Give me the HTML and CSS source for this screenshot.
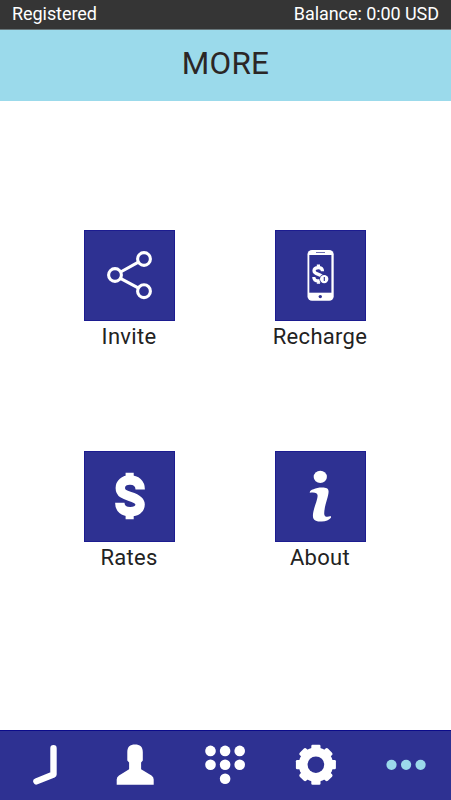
FILE: index.html
```html
<!DOCTYPE html>
<html lang="en">
<head>
<meta charset="utf-8">
<title>More</title>
<link rel="stylesheet" href="styles.css">
</head>
<body>
<div class="screen">
  <div class="status"><span class="state">Registered</span><span class="balance">Balance: 0:00 USD</span></div>
  <header class="title"><h1>MORE</h1></header>
  <main class="menu">
    <a class="item">
      <svg class="tile" viewBox="0 0 91 91" fill="none" stroke="#fff" stroke-width="3.1"><circle cx="31" cy="45" r="6.4"/><circle cx="60" cy="29" r="6.4"/><circle cx="60" cy="61.2" r="6.4"/><path d="M36.6 42L54.4 32.1M36.4 48.3L54.6 58.1"/></svg>
      <span>Invite</span>
    </a>
    <a class="item">
      <svg class="tile" viewBox="0 0 91 91"><rect x="32.5" y="20" width="26.2" height="50.7" rx="4.5" fill="#fff"/><path d="M34.3 25H56.4V62.7H34.3Z" fill="#2e3192"/><path d="M41 22.5H50" stroke="#2e3192" stroke-width=".7"/><circle cx="45.3" cy="66.6" r="1.7" fill="#2e3192"/><path d="M47.5 41.2C47.5 38.7 45.8 37.6 43.4 37.6C40.7 37.6 39 39 39 40.8C39 43 41 43.7 43.4 44.4C46 45.2 47.5 46 47.5 47.8C47.5 49.8 45.8 50.9 43.4 50.9C40.4 50.9 38.8 49.4 38.8 47M43.4 34.5V38M43.4 50.5V53.8" fill="none" stroke="#fff" stroke-width="3.2"/><circle cx="49.2" cy="49.1" r="4.9" fill="#2e3192"/><circle cx="49.2" cy="49.1" r="4.2" fill="#fff"/><path d="M49.3 47V51.1" stroke="#2e3192" stroke-width="1.1"/></svg>
      <span>Recharge</span>
    </a>
    <a class="item">
      <svg class="tile" viewBox="0 0 91 91"><path d="M56.2 38.4C56.2 32.4 52.3 29 46 29C39.9 29 36.3 32.5 36.3 36.9C36.3 42.2 40.5 43.8 46 45.4C52.8 47.4 56.1 49.5 56.1 53.6C56.1 58.2 52.3 60.7 46.2 60.7C39.5 60.7 35.8 57.5 35.8 51.8" fill="none" stroke="#fff" stroke-width="9.4"/><path d="M41.6 21.8h8.1v6h-8.1zM41.6 62h8.1v6.3h-8.1z" fill="#fff"/></svg>
      <span>Rates</span>
    </a>
    <a class="item">
      <svg class="tile" viewBox="0 0 91 91" fill="#fff"><ellipse cx="45.3" cy="25.9" rx="6.6" ry="6.2"/><path d="M34.7 41.7C35 39.4 36.1 38.9 38.5 38.2C41 37.2 43.5 36.6 47.2 36.6C51 36.6 53.6 37.3 53.6 40.6C53.6 45.5 49.2 55.5 49.2 62.5C49.2 66 51.8 66.6 55.8 65.1L56 66.7C54 69 51 70.6 46.7 70.6C41.5 70.6 37.9 69.5 37.9 64.7C37.9 58.5 42.6 49.5 42.6 44.5C42.6 41.7 39.5 41 34.7 41.7Z"/></svg>
      <span>About</span>
    </a>
  </main>
  <nav class="tabs">
    <svg viewBox="0 0 90.2 70"><path d="M53.5 18.2V44.5L36.4 51.4" fill="none" stroke="#fff" stroke-width="6.4" stroke-linecap="round" stroke-linejoin="round"/></svg>
    <svg viewBox="0 0 90.2 70"><path d="M37.3 22C37.3 16.8 40 14.5 45 14.5S52.8 16.8 52.8 22V30.5L51.1 32.5V39.3L61.5 45.5Q63.7 47 63.7 49.5V54.8H26.7V49.5Q26.7 47 29 45.5L39.1 39.3V32.5L37.3 30.5Z" fill="#fff"/></svg>
    <svg viewBox="0 0 90.2 70" fill="#fff"><circle cx="30.5" cy="20.9" r="5.3"/><circle cx="45.1" cy="20.9" r="5.3"/><circle cx="59.7" cy="20.9" r="5.3"/><circle cx="30.5" cy="34.8" r="5.3"/><circle cx="45.1" cy="34.8" r="5.3"/><circle cx="59.7" cy="34.8" r="5.3"/><circle cx="45.1" cy="48.8" r="5.3"/></svg>
    <svg viewBox="0 0 90.2 70"><g transform="translate(44.9 34.7)"><g fill="#fff"><circle r="17.2"/><rect x="-4.6" y="-20" width="9.2" height="40" rx="1.2"/><rect x="-20" y="-4.6" width="40" height="9.2" rx="1.2"/><rect x="-4.6" y="-19.9" width="9.2" height="39.8" rx="2" transform="rotate(45)"/><rect x="-4.6" y="-19.9" width="9.2" height="39.8" rx="2" transform="rotate(-45)"/></g><circle r="8.3" fill="#2e3192"/></g></svg>
    <svg viewBox="0 0 90.2 70" fill="#9bdaeb"><circle cx="30.5" cy="34.8" r="5.1"/><circle cx="45.1" cy="34.8" r="5.1"/><circle cx="59.6" cy="34.8" r="5.1"/></svg>
  </nav>
</div>
</body>
</html>
```
FILE: styles.css
```css
* { box-sizing: border-box; }
body {
  margin: 0;
  background: #fff;
  font-family: Roboto, sans-serif;
}
.screen {
  width: 451px;
  height: 800px;
  display: flex;
  flex-direction: column;
}
.status {
  height: 30px;
  padding: 0 12px;
  display: flex;
  justify-content: space-between;
  line-height: 28px;
  font-size: 18px;
  letter-spacing: -.06px;
  color: #fff;
  background: #353535;
  border-bottom: 1px solid #68777b;
}
.title {
  height: 71px;
  background: #9bdaeb;
}
.title h1 {
  margin: 0;
  text-align: center;
  font-size: 31.5px;
  font-weight: 400;
  letter-spacing: .2px;
  line-height: 68px;
  color: #2b2626;
}
.menu {
  flex: 1;
  padding: 129px 2px 0 0;
  display: grid;
  grid-template-columns: 191px 191px;
  grid-auto-rows: 221px;
  justify-content: center;
}
.item {
  display: flex;
  flex-direction: column;
  align-items: center;
  font-size: 22px;
  letter-spacing: .3px;
  line-height: 31px;
  color: #222;
}
.tile {
  width: 91px;
  height: 91px;
  background: #2e3192;
  outline: 1px solid #1c1c90;
  outline-offset: -1px;
}
.tabs {
  height: 70px;
  display: grid;
  grid-template-columns: repeat(5, 1fr);
  background: #2e3192;
  border-top: 1px solid #0b0b8a;
}
.tabs svg {
  width: 100%;
  height: 70px;
  margin-top: -1px;
}
```
